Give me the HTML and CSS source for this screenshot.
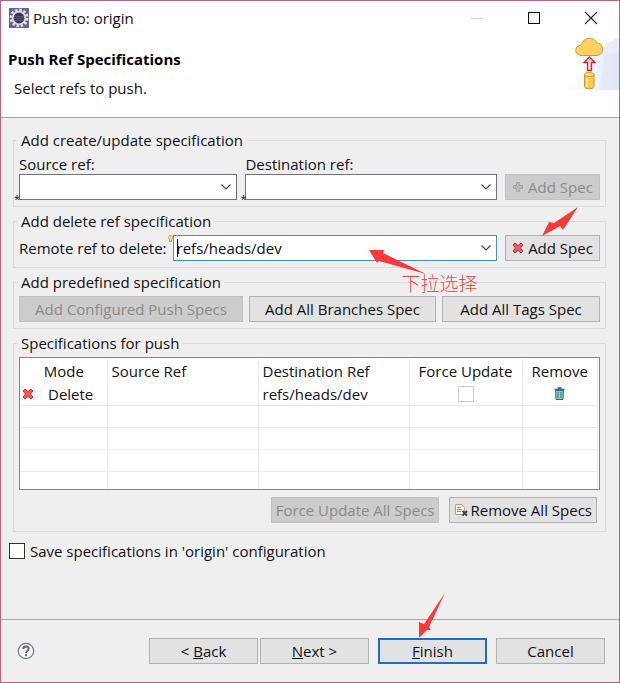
FILE: index.html
```html
<!DOCTYPE html>
<html lang="en">
<head>
<meta charset="utf-8">
<title>Push to: origin</title>
<meta name="viewport" content="width=device-width, initial-scale=1">
<link rel="stylesheet" href="styles.css">
</head>
<body>
<main class="dialog">
  <header class="head">
    <div class="titlebar">
      <svg class="app-icon" viewBox="0 0 20 20" aria-hidden="true">
        <rect width="20" height="20" fill="#6a6094"/>
        <circle cx="10" cy="10" r="8" fill="none" stroke="#e2dfe6" stroke-width="3" stroke-dasharray="2.4 1.79"/>
        <circle cx="10" cy="10" r="6.3" fill="#3a3748" stroke="#dedce4" stroke-width="1.8"/>
        <path d="M5 8.500h10M4.600 10.500h10.800M5.500 12.500h9" stroke="#5b5870" stroke-width="1"/>
      </svg>
      <span class="title">Push to: origin</span>
      <div class="window-buttons">
        <button class="win" type="button" aria-label="Minimize" disabled><svg viewBox="0 0 14 14"><path d="M1 7.500h12" stroke="#d0d0d0"/></svg></button>
        <button class="win" type="button" aria-label="Maximize"><svg viewBox="0 0 14 14"><rect x="1.500" y="1.500" width="11" height="11" fill="none" stroke="#000"/></svg></button>
        <button class="win" type="button" aria-label="Close"><svg viewBox="0 0 14 14"><path d="M1 1l12 12M13 1L1 13" stroke="#222" stroke-width="1.100"/></svg></button>
      </div>
    </div>
    <div class="intro">
      <div>
        <h1>Push Ref Specifications</h1>
        <p>Select refs to push.</p>
      </div>
      <svg class="banner" viewBox="-2 0 60 55" aria-hidden="true">
        <defs><linearGradient id="glow"><stop offset="0" stop-color="#fff"/><stop offset="1" stop-color="#e3eaf9"/></linearGradient></defs>
        <path d="M0 55Q22 42 36 16Q48 6 60 2V55z" fill="url(#glow)"/>
        <path d="M43 21Q50 16 60 18V55H38z" fill="#dbe4f6" opacity=".5"/>
        <path d="M21.500 20.500C13 21 12.500 10.500 20.500 10C22.500 1 34 1.500 35.500 8C43 7.500 44.500 20 35.500 20.500z" fill="#fbd162" stroke="#d09a30"/>
        <path d="M28.500 22l5.500 5.500h-3.500v8h-4v-8H23z" fill="#fbd6d6" stroke="#c9242c" stroke-width="1.300"/>
        <path d="M23.500 39.500v12c0 3 9.500 3 9.500 0v-12" fill="#f7cb50" stroke="#c99a27"/>
        <ellipse cx="28.250" cy="39.500" rx="4.750" ry="2" fill="#fbe08c" stroke="#c99a27"/>
        <path d="M26 43v9" stroke="#fff0b8" stroke-width="1.500"/>
      </svg>
    </div>
  </header>

  <form class="body">
    <fieldset>
      <legend>Add create/update specification</legend>
      <div class="create-grid">
        <div class="field">
          <label for="source">Source ref:</label>
          <span class="combo required"><input id="source" type="text"><button type="button" aria-label="Show source refs"><svg viewBox="0 0 10 10"><path d="M.500 2.500L5 7l4.500-4.500"/></svg></button></span>
        </div>
        <div class="field">
          <label for="dest">Destination ref:</label>
          <span class="combo required"><input id="dest" type="text"><button type="button" aria-label="Show destination refs"><svg viewBox="0 0 10 10"><path d="M.500 2.500L5 7l4.500-4.500"/></svg></button></span>
        </div>
        <button class="btn" type="button" disabled><svg class="glyph" viewBox="0 0 12 12" aria-hidden="true"><path d="M4.500 1.500h3v3h3v3h-3v3h-3v-3h-3v-3h3z" fill="#bbb" stroke="#a2a2a2"/></svg><span>Add Spec</span></button>
      </div>
    </fieldset>

    <fieldset>
      <legend>Add delete ref specification</legend>
      <div class="delete-row">
        <div class="remote">
          <label for="remote">Remote ref to delete:</label>
          <span class="combo focused">
            <svg class="bulb" viewBox="0 0 5 7" aria-hidden="true"><path d="M1.500 4.500C-.5 2.500 1 .500 2.500 .500S5.500 2.500 3.500 4.500V6.500h-2z" fill="#ffe7a3" stroke="#c48a25" stroke-width=".9"/></svg>
            <i class="caret"></i><input id="remote" type="text" value="refs/heads/dev"><button type="button" aria-label="Show remote refs"><svg viewBox="0 0 10 10"><path d="M.500 2.500L5 7l4.500-4.500"/></svg></button>
          </span>
        </div>
        <button class="btn" type="button"><svg class="glyph" viewBox="0 0 12 12" aria-hidden="true"><path d="M1 3l2-2 3 2.500L9 1l2 2-2.500 3L11 9l-2 2-3-2.500L3 11 1 9l2.500-3z" fill="#e35e68" stroke="#b92c3c"/></svg><span>Add Spec</span><svg class="arrow arrow-add" viewBox="0 0 38 31" aria-hidden="true"><path d="M37 1L22 24l-3-4L1 30 8 16l5 1z" fill="#fb3a37"/></svg></button>
        <div class="hint">
          <svg class="arrow arrow-hint" viewBox="0 0 60 28" aria-hidden="true"><path d="M1 1l15 0-1 3 43 21-47-13-2 2z" fill="#fb3a37"/></svg>
          <span>下拉选择</span>
        </div>
      </div>
    </fieldset>

    <fieldset>
      <legend>Add predefined specification</legend>
      <div class="predefined">
        <button class="btn" type="button" disabled>Add Configured Push Specs</button>
        <button class="btn" type="button">Add All Branches Spec</button>
        <button class="btn" type="button">Add All Tags Spec</button>
      </div>
    </fieldset>

    <fieldset>
      <legend>Specifications for push</legend>
      <div class="table-frame">
        <table>
          <colgroup><col class="c-mode"><col class="c-ref"><col class="c-ref"><col class="c-force"><col></colgroup>
          <thead><tr><th class="center">Mode</th><th>Source Ref</th><th>Destination Ref</th><th class="center">Force Update</th><th class="center">Remove</th></tr></thead>
          <tbody>
            <tr>
              <td><span class="mode"><svg class="glyph" viewBox="0 0 12 12" aria-hidden="true"><path d="M1 3l2-2 3 2.500L9 1l2 2-2.500 3L11 9l-2 2-3-2.500L3 11 1 9l2.500-3z" fill="#ef5a5a" stroke="#c52c34"/></svg>Delete</span></td>
              <td></td><td>refs/heads/dev</td>
              <td><span class="cell-control"><input class="check light" type="checkbox" aria-label="Force update"></span></td>
              <td><span class="cell-control"><button class="trash" type="button" aria-label="Remove"><svg viewBox="0 0 11 13"><path d="M1.500 3.500h8l-.5 9h-7z" fill="#8fcdbd" stroke="#2d6c96"/><path d="M.500 2.500h10M3.500 1h4" stroke="#2d6c96" stroke-width="1.300"/><path d="M4 5v6M7 5v6" stroke="#2a7f88"/></svg></button></span></td>
            </tr>
            <tr><td></td><td></td><td></td><td></td><td></td></tr>
            <tr><td></td><td></td><td></td><td></td><td></td></tr>
            <tr><td></td><td></td><td></td><td></td><td></td></tr>
            <tr><td></td><td></td><td></td><td></td><td></td></tr>
          </tbody>
        </table>
      </div>
      <div class="table-actions">
        <button class="btn" type="button" disabled>Force Update All Specs</button>
        <button class="btn" type="button"><svg class="glyph doc" viewBox="0 0 14 14" aria-hidden="true"><path d="M1.500 1.500h6l3 3v7h-9z" fill="#fffdf0" stroke="#b5a368"/><path d="M3 4.500h4M3 6.500h5M3 8.500h4" stroke="#7394be"/><path d="M8.500 8l4.500 4.500M13 8l-4.500 4.500" stroke="#444" stroke-width="2"/></svg><span>Remove All Specs</span></button>
      </div>
    </fieldset>

    <label class="save"><input class="check" type="checkbox">Save specifications in 'origin' configuration</label>
  </form>

  <footer>
    <button class="help" type="button" aria-label="Help"><svg viewBox="0 0 18 18"><circle cx="9" cy="9" r="7.700" fill="#f6f6fa" stroke="#6f7590" stroke-width="1.200"/><path d="M6.300 7C6.300 3.700 11.700 3.800 11.700 6.800C11.700 8.700 9 8.700 9 11M9 12.300v1.900" fill="none" stroke="#59617f" stroke-width="1.900"/></svg></button>
    <div class="nav">
      <button class="btn" type="button"><span>&lt; <u>B</u>ack</span></button>
      <button class="btn" type="button"><span><u>N</u>ext &gt;</span></button>
    </div>
    <button class="btn primary" type="button"><span><u>F</u>inish</span><svg class="arrow arrow-finish" viewBox="0 0 28 46" aria-hidden="true"><path d="M27 1L11 35l2 3-4 0-8 8V30l5 2z" fill="#fb3a37"/></svg></button>
    <button class="btn" type="button">Cancel</button>
  </footer>
</main>
</body>
</html>
```
FILE: styles.css
```css
* { box-sizing: border-box; }

body {
  margin: 0;
  font: 15px/20px "Open Sans", "Noto Sans", "Noto Sans CJK SC", sans-serif;
  color: #111;
}

button, input { font: inherit; color: inherit; }

.dialog {
  display: flex;
  flex-direction: column;
  min-height: 100vh;
  border: 1px solid #b8657f;
  background: #efefef;
}

.head { background: #fff; border-bottom: 1px solid #a5a0a3; }

.titlebar { display: flex; align-items: center; height: 34px; padding-left: 8px; }
.app-icon { width: 20px; height: 20px; margin-right: 4px; }
.window-buttons { display: flex; margin-left: auto; }
.win {
  display: grid;
  place-items: center;
  width: 57px;
  height: 34px;
  padding: 0;
  border: 0;
  background: none;
}
.win svg { width: 14px; height: 14px; }

.intro { display: flex; justify-content: space-between; height: 82px; }
h1 { margin: 14px 0 0 7px; font-size: 15px; line-height: 20px; color: #000; }
.intro p { margin: 9px 0 0 13px; }
.banner { width: 60px; height: 55px; }

.body { flex: 1; display: flex; flex-direction: column; gap: 5px; padding: 13px 13px 12px 12px; }

fieldset {
  min-width: 0;
  margin: 0;
  padding: 5px 5px 6px;
  border: 1px solid #dcdcdc;
}
legend { margin-left: -1px; padding: 0 3px; line-height: 18px; }

.create-grid {
  display: grid;
  grid-template-columns: 218fr 251fr 95px;
  align-items: end;
  column-gap: 8px;
}
.field { display: flex; flex-direction: column; min-width: 0; }

.combo {
  position: relative;
  display: flex;
  height: 26px;
  border: 1px solid #707078;
  background: #fff;
}
.combo input {
  flex: 1;
  min-width: 0;
  padding: 0 3px;
  border: 0;
  outline: 0;
  background: none;
}
.combo button {
  display: grid;
  place-items: center;
  width: 20px;
  padding: 0;
  border: 0;
  background: none;
}
.combo button svg { width: 10px; height: 10px; fill: none; stroke: #444; stroke-width: 1.2; }
.required::before {
  content: "*";
  position: absolute;
  left: -6px;
  bottom: -7px;
  font-size: 11px;
  line-height: 14px;
}
.focused { border-color: #4a90d0; }
.caret { position: absolute; left: 3px; top: 3px; width: 1px; height: 18px; background: #111; }
.bulb { position: absolute; left: -6px; top: -1px; width: 5px; height: 7px; }

.btn {
  position: relative;
  display: flex;
  align-items: center;
  justify-content: center;
  height: 26px;
  padding: 0 4px;
  border: 1px solid #b2b2b2;
  background: #e2e2e2;
  white-space: nowrap;
}
.btn:disabled { border-color: #c2c2c2; background: #cccccc; color: #8b8b8b; }
.glyph { flex: none; width: 12px; height: 12px; margin-right: 4px; }
.doc { width: 14px; height: 14px; margin-right: 2px; }

.delete-row {
  position: relative;
  display: grid;
  grid-template-columns: 1fr 95px;
  align-items: center;
  column-gap: 8px;
}
.remote { display: flex; align-items: center; gap: 6px; min-width: 0; }
.remote .combo { flex: 1; min-width: 0; }

.hint {
  position: absolute;
  left: 60%;
  top: 14px;
  z-index: 1;
  color: #f04a45;
  font: 19px/24px "Noto Sans CJK SC", sans-serif;
  pointer-events: none;
}
.hint span { display: block; margin: -6px 0 0 34px; font-weight: 300; }
.arrow { position: absolute; z-index: 1; pointer-events: none; }
.arrow-hint { position: static; display: block; width: 60px; height: 28px; }
.arrow-add { left: 35px; top: -30px; width: 38px; height: 31px; }
.arrow-finish { left: 38px; top: -48px; width: 28px; height: 46px; }

.predefined { display: grid; grid-template-columns: 224fr 187fr 158fr; gap: 6px; }

.table-frame { height: 133px; padding: 1px; border: 1px solid #858585; background: #fff; overflow: hidden; }
table { width: 100%; table-layout: fixed; border-collapse: collapse; }
.c-mode { width: 86px; }
.c-ref { width: 151px; }
.c-force { width: 113px; }
th, td {
  height: 22px;
  padding: 0 4px;
  border-right: 1px solid #ebebeb;
  line-height: 20px;
  text-align: left;
  font-weight: 400;
  white-space: nowrap;
}
th { height: 24px; }
tbody td { border-bottom: 1px solid #ebebeb; }
tbody tr:last-child td { border-bottom: 0; }
.center { text-align: center; }
.mode { display: flex; align-items: center; gap: 10px; margin-left: -3px; }
.cell-control { display: flex; align-items: center; justify-content: center; height: 20px; }
.trash { padding: 0; border: 0; background: none; }
.trash svg { display: block; width: 11px; height: 13px; }

.check {
  appearance: none;
  width: 16px;
  height: 16px;
  margin: 0;
  border: 1px solid #333;
  background: #fff;
}
.light { border-color: #ccc; }

.table-actions { display: flex; justify-content: flex-end; gap: 10px; padding: 7px 3px 2px 0; }

.save { display: flex; align-items: center; gap: 5px; margin: 4px 0 0 -4px; }

footer {
  display: flex;
  align-items: center;
  gap: 9px;
  height: 63px;
  padding: 0 14px 0 16px;
  border-top: 1px solid #a5a5a5;
}
.help { margin-right: auto; padding: 0; border: 0; background: none; }
.help svg { display: block; width: 18px; height: 18px; }
.nav { display: flex; gap: 2px; }
footer .btn { width: 109px; }
footer .primary { border: 2px solid #1a6fc4; }
```
